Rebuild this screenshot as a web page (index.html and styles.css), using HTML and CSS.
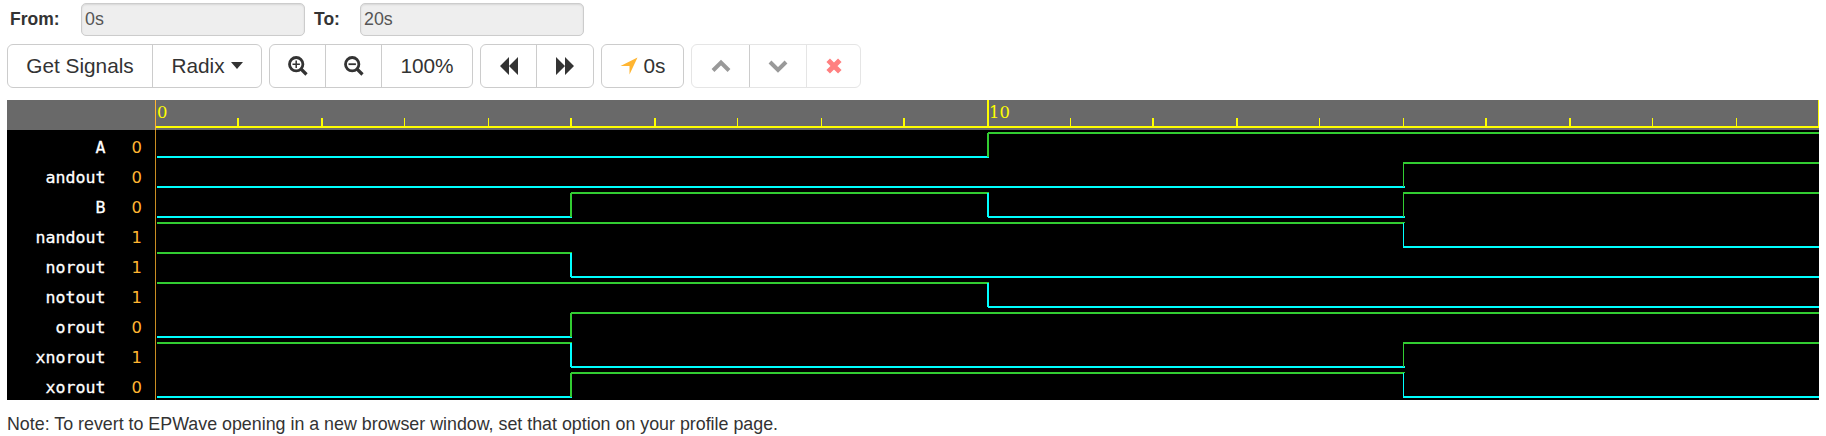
FILE: index.html
```html
<!DOCTYPE html>
<html lang="en">
<head>
<meta charset="utf-8">
<title>EPWave</title>
<link rel="stylesheet" href="styles.css">
</head>
<body>
<form class="range">
  <label class="from" for="from">From:</label><input id="from" value="0s" disabled>
  <label class="to" for="to">To:</label><input id="to" value="20s" disabled>
</form>
<div class="toolbar">
  <div class="group"><button class="get">Get Signals</button><button class="radix">Radix <i class="caret"></i></button></div>
  <div class="group zoom">
    <button><svg width="20" height="20" viewBox="0 0 20 20"><circle cx="8.2" cy="8.2" r="6.7" fill="none" stroke="#333" stroke-width="2.8"/><path d="M13 13l5.5 5.5" stroke="#333" stroke-width="3.2"/><path d="M4.5 8.2h7.4M8.2 4.5v7.4" stroke="#333" stroke-width="1.5"/></svg></button>
    <button><svg width="20" height="20" viewBox="0 0 20 20"><circle cx="8.2" cy="8.2" r="6.7" fill="none" stroke="#333" stroke-width="2.8"/><path d="M13 13l5.5 5.5" stroke="#333" stroke-width="3.2"/><path d="M4.5 8.2h7.4" stroke="#333" stroke-width="1.8"/></svg></button>
    <button class="percent">100%</button>
  </div>
  <div class="group step">
    <button><svg width="20" height="20" viewBox="0 0 20 20"><path d="M10 1v18L1 10zM19 1v18l-9-9z" fill="#333"/></svg></button>
    <button><svg width="20" height="20" viewBox="0 0 20 20"><path d="M1 1v18l9-9zM10 1v18l9-9z" fill="#333"/></svg></button>
  </div>
  <div class="group time"><button><svg width="18" height="18" viewBox="0 0 18 18"><path d="M17.5.5L9.5 17.5V9H.5z" fill="#ffb531"/></svg>0s</button></div>
  <div class="group faded">
    <button><svg width="20" height="20" viewBox="0 0 20 20"><path d="M2 14.5l8-8 8 8" fill="none" stroke="#999" stroke-width="4"/></svg></button>
    <button><svg width="20" height="20" viewBox="0 0 20 20"><path d="M2 6l8 8 8-8" fill="none" stroke="#999" stroke-width="4"/></svg></button>
    <button><svg width="16" height="16" viewBox="0 0 16 16"><path d="M2.2 2.2l11.6 11.6M13.8 2.2L2.2 13.8" stroke="#ff8080" stroke-width="5"/></svg></button>
  </div>
</div>
<main class="wave">
  <div class="names">
    <div class="head"></div>
    <div class="row"><span>A</span><b>0</b></div>
    <div class="row"><span>andout</span><b>0</b></div>
    <div class="row"><span>B</span><b>0</b></div>
    <div class="row"><span>nandout</span><b>1</b></div>
    <div class="row"><span>norout</span><b>1</b></div>
    <div class="row"><span>notout</span><b>1</b></div>
    <div class="row"><span>orout</span><b>0</b></div>
    <div class="row"><span>xnorout</span><b>1</b></div>
    <div class="row"><span>xorout</span><b>0</b></div>
  </div>
  <svg class="plot" width="1664" height="300" viewBox="155 100 1664 300" shape-rendering="crispEdges">
    <rect x="155" y="100" width="1664" height="30" fill="#696969"/>
    <path fill="#ff0" d="M156 126h1663v2H156zM237 118h2v8h-2zM321 118h2v8h-2zM404 118h1v8h-1zM488 118h1v8h-1zM570 118h2v8h-2zM654 118h2v8h-2zM737 118h1v8h-1zM821 118h1v8h-1zM903 118h2v8h-2zM987 100h2v26h-2zM1070 118h1v8h-1zM1152 118h2v8h-2zM1236 118h2v8h-2zM1319 118h1v8h-1zM1403 118h1v8h-1zM1485 118h2v8h-2zM1569 118h2v8h-2zM1652 118h1v8h-1zM1736 118h1v8h-1zM1818 100h1v26h-1z"/>
    <text class="tick" x="157" y="118">0</text><text class="tick" x="989" y="118">10</text>
    <path fill="#0ff" d="M157 156h832v2H157zM157 186h1248v2H157zM157 216h415v2H157zM987 193h2v24h-2zM988 216h417v2H988zM1403 223h1v25h-1zM1403 246h416v2h-416zM570 253h2v24h-2zM571 276h1248v2H571zM987 283h2v24h-2zM988 306h831v2H988zM157 336h415v2H157zM570 343h2v24h-2zM571 366h834v2H571zM157 396h415v2H157zM1403 373h1v25h-1zM1403 396h416v2h-416z"/>
    <path fill="#32cd32" d="M987 133h2v24h-2zM988 132h831v2H988zM1403 162h1v25h-1zM1403 162h416v2h-416zM570 193h2v24h-2zM571 192h418v1H571zM572 193h415v1H572zM1403 192h1v25h-1zM1403 192h416v2h-416zM157 222h1248v1H157zM157 223h1246v1H157zM157 252h415v1H157zM157 253h413v1H157zM157 282h832v1H157zM157 283h830v1H157zM570 313h2v24h-2zM571 312h1248v2H571zM157 342h415v1H157zM157 343h413v1H157zM1403 342h1v25h-1zM1403 342h416v2h-416zM570 373h2v24h-2zM571 372h834v1H571zM572 373h831v1H572z"/>
    <path fill="#ffb531" d="M155 100h1v30h-1z"/><path fill="#c98d22" d="M155 130h1v270h-1z"/>
  </svg>
</main>
<p class="note">Note: To revert to EPWave opening in a new browser window, set that option on your profile page.</p>
</body>
</html>
```
FILE: styles.css
```css
* { box-sizing: border-box; }
body { margin: 0; padding: 3px 7px 0; background: #fff; color: #333; font: 17.84px/25px "Liberation Sans", Arial, sans-serif; }
.range { display: flex; height: 33px; align-items: center; }
.range label { font-weight: bold; font-size: 17.5px; padding-bottom: 1px; }
.range .from { width: 74px; padding-left: 3px; }
.range .to { width: 55px; padding-left: 9px; }
.range input { width: 224px; height: 33px; margin: 0; padding: 0 3px 1px; border: 1px solid #ccc; border-radius: 5px; background: #eee; color: #555; font: inherit; box-shadow: inset 0 1px 2px rgba(0,0,0,.1); }
.toolbar { display: flex; gap: 7px; margin-top: 8px; height: 44px; }
.group { display: flex; height: 44px; border: 1px solid #ccc; border-radius: 6px; }
.group button { display: flex; align-items: center; justify-content: center; flex: none; margin: 0; padding: 0 0 1px; border: 0; background: none; color: #333; font: 20.8px/25px "Liberation Sans", Arial, sans-serif; }
.group button + button { border-left: 1px solid #ccc; }
.group .get { width: 144px; }
.group .radix { width: 109px; }
.caret { margin-left: 6px; border: 6px solid transparent; border-top: 7px solid #333; border-bottom: 0; }
.zoom button { width: 56px; }
.zoom button:first-child, .step button:first-child { width: 55px; }
.zoom .percent { width: 91px; }
.step button { width: 57px; }
.time button { width: 81px; gap: 6px; }
.group.faded { border-color: #e5e5e5; }
.faded button { width: 57px; }
.faded button:last-child { width: 54px; border-color: #e5e5e5; }
.wave { display: flex; width: 1812px; height: 300px; margin-top: 12px; background: #000; }
.names { width: 148px; }
.head { height: 30px; background: #696969; }
.row { display: flex; height: 30px; line-height: 35px; color: #fff; font-size: 16.6px; font-family: "DejaVu Sans Mono", monospace; }
.row span { width: 98.5px; text-align: right; -webkit-text-stroke: .3px #fff; }
.row b { width: 11px; margin-left: 26px; color: #ffb531; font: 16.4px/35px "DejaVu Sans", sans-serif; }
.plot { display: block; }
.tick { fill: #ff0; font: 16.4px "DejaVu Serif", serif; }
.note { margin: 12px 0 0; }
```
